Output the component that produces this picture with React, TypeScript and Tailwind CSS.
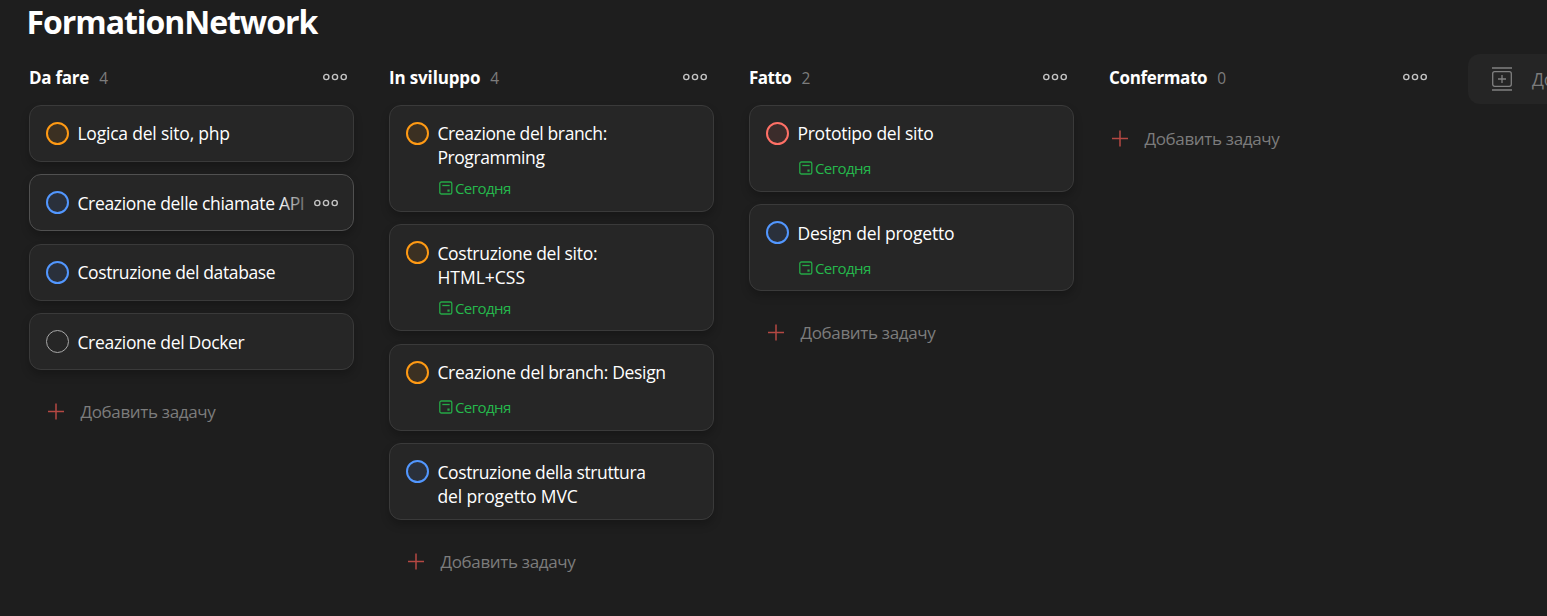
import React from 'react';

type Tone = 'orange' | 'blue' | 'red' | 'plain';

interface Task {
  lines: { text: string; tracking: string }[];
  tone: Tone;
  height: string;
  today?: boolean;
  active?: boolean;
}

interface Column {
  title: string;
  titleClass: string;
  count: number;
  tasks: Task[];
}

const TONES: Record<Tone, string> = {
  orange: 'border-2 border-[#ff9a14] bg-[#3b3022]',
  blue: 'border-2 border-[#5297ff] bg-[#2a303b]',
  red: 'border-2 border-[#ff7066] bg-[#3b2c2b]',
  plain: 'border border-[#a8a8a8]',
};

const COLUMNS: Column[] = [
  {
    title: 'Da fare',
    titleClass: 'tracking-[-0.25px]',
    count: 4,
    tasks: [
      { lines: [{ text: 'Logica del sito, php', tracking: 'tracking-[-0.2px]' }], tone: 'orange', height: 'h-[57px]' },
      { lines: [{ text: 'Creazione delle chiamate API', tracking: 'tracking-[-0.32px]' }], tone: 'blue', height: 'h-[57px]', active: true },
      { lines: [{ text: 'Costruzione del database', tracking: 'tracking-[-0.37px]' }], tone: 'blue', height: 'h-[57px]' },
      { lines: [{ text: 'Creazione del Docker', tracking: 'tracking-[-0.31px]' }], tone: 'plain', height: 'h-[57px]' },
    ],
  },
  {
    title: 'In sviluppo',
    titleClass: 'tracking-[-0.15px]',
    count: 4,
    tasks: [
      {
        lines: [
          { text: 'Creazione del branch:', tracking: 'tracking-[-0.38px]' },
          { text: 'Programming', tracking: 'tracking-[-0.41px]' },
        ],
        tone: 'orange',
        height: 'h-[107px]',
        today: true,
      },
      {
        lines: [
          { text: 'Costruzione del sito:', tracking: 'tracking-[-0.29px]' },
          { text: 'HTML+CSS', tracking: 'tracking-[0px]' },
        ],
        tone: 'orange',
        height: 'h-[107px]',
        today: true,
      },
      { lines: [{ text: 'Creazione del branch: Design', tracking: 'tracking-[-0.33px]' }], tone: 'orange', height: 'h-[87px]', today: true },
      {
        lines: [
          { text: 'Costruzione della struttura', tracking: 'tracking-[-0.38px]' },
          { text: 'del progetto MVC', tracking: 'tracking-[-0.1px]' },
        ],
        tone: 'blue',
        height: 'h-[76.5px]',
      },
    ],
  },
  {
    title: 'Fatto',
    titleClass: 'tracking-[-0.5px]',
    count: 2,
    tasks: [
      { lines: [{ text: 'Prototipo del sito', tracking: 'tracking-[-0.24px]' }], tone: 'red', height: 'h-[87px]', today: true },
      { lines: [{ text: 'Design del progetto', tracking: 'tracking-[-0.17px]' }], tone: 'blue', height: 'h-[87px]', today: true },
    ],
  },
  { title: 'Confermato', titleClass: 'tracking-[-0.35px]', count: 0, tasks: [] },
];

function Dots() {
  return (
    <svg className="h-[8px] w-[26px] shrink-0" viewBox="0 0 26 8" fill="none" stroke="#c4c4c4" strokeWidth="1.4">
      <circle cx="4.3" cy="4" r="2.6" />
      <circle cx="13" cy="4" r="2.6" />
      <circle cx="21.7" cy="4" r="2.6" />
    </svg>
  );
}

function TodayLabel() {
  return (
    <div className="mt-auto ml-[32px] flex h-[20px] items-center text-[15px] text-[#25b84c]">
      <svg className="mr-[2px] ml-px h-[14px] w-[14px]" viewBox="0 0 14 14" fill="none" stroke="#25a846" strokeWidth="1.3">
        <rect x="0.8" y="1" width="12" height="12" rx="1.6" />
        <path d="M3.3 4.5h7.4" />
        <rect x="8.4" y="8.5" width="2.2" height="2.2" fill="#25a846" stroke="none" />
      </svg>
      <span className="leading-[20px] tracking-[-0.58px] whitespace-nowrap">Сегодня</span>
    </div>
  );
}

function TaskCard({ task }: { task: Task }) {
  return (
    <li
      className={`flex flex-col rounded-[12px] border bg-[#262626] px-[16px] pt-[15.25px] pb-[12.5px] shadow-[0_5px_8px_rgba(0,0,0,0.22)] ${
        task.active ? 'border-[#505050]' : 'border-[#3a3a3a]'
      } ${task.height}`}
    >
      <div className="flex items-start">
        <span className={`mt-[0.75px] mr-[8.4px] h-[23px] w-[23px] shrink-0 rounded-full ${TONES[task.tone]}`} />
        <div className="relative min-w-0 flex-1 overflow-hidden text-[17.5px] leading-[24px] whitespace-nowrap text-white">
          {task.lines.map((line) => (
            <p key={line.text} className={line.tracking}>
              {line.text}
            </p>
          ))}
          {task.active && <span className="absolute inset-y-0 right-0 w-[26px] bg-linear-to-r from-[#26262600] to-[#262626b0]" />}
        </div>
        {task.active && (
          <span className="mt-[8px] -mr-[2px] ml-[8px] flex">
            <Dots />
          </span>
        )}
      </div>
      {task.today && <TodayLabel />}
    </li>
  );
}

function AddTask({ empty }: { empty: boolean }) {
  return (
    <button className={`flex h-[24px] items-center text-[17px] text-[#7c7c7c] ${empty ? 'mt-[21.6px] ml-[2px]' : 'mt-[29.6px] ml-[18px]'}`}>
      <svg className="mr-[15.4px] h-[17px] w-[18px]" viewBox="0 0 18 17" stroke="#b54843" strokeWidth="1.5">
        <path d="M9 0.5v16M1 8.5h16" />
      </svg>
      <span className="tracking-[-0.34px] whitespace-nowrap">Добавить задачу</span>
    </button>
  );
}

function BoardColumn({ column }: { column: Column }) {
  return (
    <section className="flex w-[325px] shrink-0 flex-col">
      <header className="flex h-[46.8px] items-center pr-[6px]">
        <h2 className={`mb-[7px] text-[17px] leading-[24px] font-bold whitespace-nowrap text-white ${column.titleClass}`}>{column.title}</h2>
        <span className="mb-[7px] ml-[10px] text-[15.5px] leading-[22px] text-[#7c7c7c]">{column.count}</span>
        <span className="mb-[8px] ml-auto flex">
          <Dots />
        </span>
      </header>
      {column.tasks.length > 0 && (
        <ul className="flex flex-col gap-[12.5px]">
          {column.tasks.map((task) => (
            <TaskCard key={task.lines[0].text} task={task} />
          ))}
        </ul>
      )}
      <AddTask empty={column.tasks.length === 0} />
    </section>
  );
}

export default function App() {
  return (
    <main className="h-[616px] w-full overflow-hidden bg-[#1e1e1e] font-['Open_Sans','Noto_Sans',sans-serif]">
      <h1 className="h-[58px] pl-[26.5px] text-[32px] leading-[43px] font-bold tracking-[-1.05px] text-white">FormationNetwork</h1>
      <div className="flex gap-[35px] pl-[29px]">
        {COLUMNS.map((column) => (
          <BoardColumn key={column.title} column={column} />
        ))}
        <button className="-mt-[4px] -ml-px flex h-[50px] w-[325px] shrink-0 items-center rounded-[12px] bg-[#252525] pl-[24px] text-[17.5px] text-[#7c7c7c]">
          <svg className="mr-[20px] h-[24px] w-[20px] shrink-0" viewBox="0 0 20 24" fill="none" stroke="#808080" strokeWidth="1.3">
            <path d="M0 1h20M0 23h20" />
            <rect x="0.7" y="4.7" width="18.6" height="14.6" rx="2" />
            <path d="M10 8v8M6 12h8" />
          </svg>
          <span className="tracking-[-0.3px] whitespace-nowrap">Добавить раздел</span>
        </button>
      </div>
    </main>
  );
}
